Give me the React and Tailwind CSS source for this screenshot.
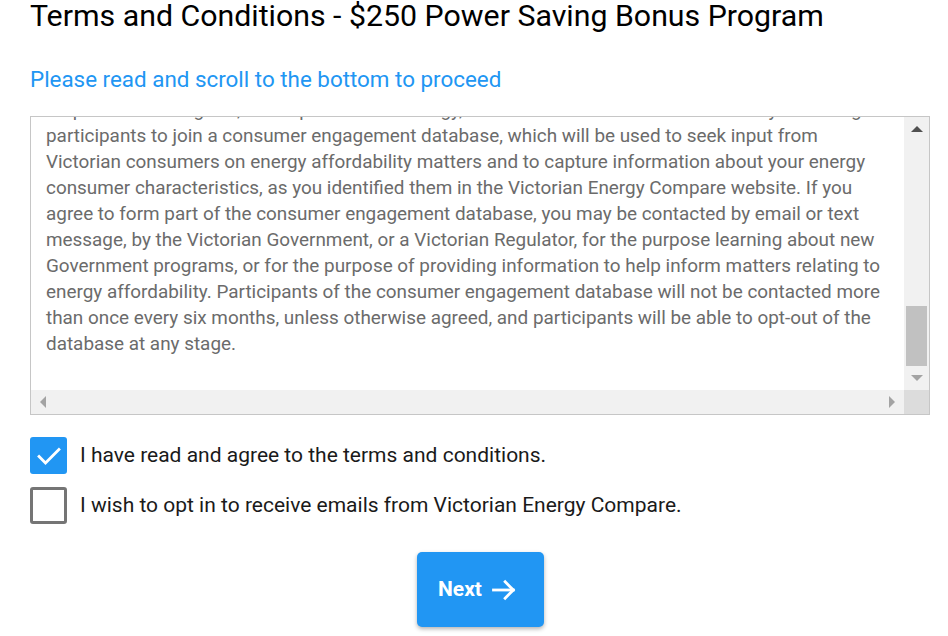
const lines = [
  "As part of the Program, the Department of Energy, Environment and Climate Action may invite eligible",
  "participants to join a consumer engagement database, which will be used to seek input from",
  "Victorian consumers on energy affordability matters and to capture information about your energy",
  "consumer characteristics, as you identified them in the Victorian Energy Compare website. If you",
  "agree to form part of the consumer engagement database, you may be contacted by email or text",
  "message, by the Victorian Government, or a Victorian Regulator, for the purpose learning about new",
  "Government programs, or for the purpose of providing information to help inform matters relating to",
  "energy affordability. Participants of the consumer engagement database will not be contacted more",
  "than once every six months, unless otherwise agreed, and participants will be able to opt-out of the",
  "database at any stage.",
];

function Arrow({ dir, color }) {
  const pts = {
    up: "0,6 6,0 12,6",
    down: "0,0 12,0 6,6",
    left: "6,0 6,12 0,6",
    right: "0,0 6,6 0,12",
  }[dir];
  const vertical = dir === "up" || dir === "down";
  return (
    <svg width={vertical ? 12 : 6} height={vertical ? 6 : 12} viewBox={vertical ? "0 0 12 6" : "0 0 6 12"}>
      <polygon points={pts} fill={color} />
    </svg>
  );
}

export default function App() {
  return (
    <div className="w-[948px] h-[636px] overflow-hidden bg-white pl-[30px] font-['Roboto',sans-serif]">
      <div className="w-[900px]">
        <h1 className="text-[30.3px] leading-[32px] text-black whitespace-nowrap">
          Terms and Conditions - $250 Power Saving Bonus Program
        </h1>
        <p className="mt-[34px] text-[22.4px] leading-[26px] text-[#2196f3]">
          Please read and scroll to the bottom to proceed
        </p>

        <div className="mt-[24px] w-[900px] h-[299px] border border-[#c6c6c6] flex flex-col">
          <div className="flex flex-1 min-h-0">
            <div className="flex-1 overflow-hidden pl-[15px]">
              <div className="-mt-[20px] text-[18.9px] leading-[26px] text-[#6b6b6b]">
                {lines.map((l, i) => (
                  <div key={i} className="whitespace-nowrap">{l}</div>
                ))}
              </div>
            </div>
            <div className="w-[25px] bg-[#f1f1f1] flex flex-col items-center">
              <div className="h-[22px] flex items-center justify-center pt-[2px]">
                <Arrow dir="up" color="#505050" />
              </div>
              <div className="flex-1 w-full px-[2px] flex flex-col justify-end">
                <div className="h-[60px] bg-[#c1c1c1]"></div>
              </div>
              <div className="h-[24px] flex items-center justify-center">
                <Arrow dir="down" color="#a3a3a3" />
              </div>
            </div>
          </div>
          <div className="h-[24px] flex">
            <div className="flex-1 bg-[#f1f1f1] flex items-center justify-between pl-[9px] pr-[9px]">
              <Arrow dir="left" color="#a3a3a3" />
              <Arrow dir="right" color="#a3a3a3" />
            </div>
            <div className="w-[25px] bg-[#dcdcdc]"></div>
          </div>
        </div>

        <div className="mt-[22px] flex flex-col gap-[13px]">
          <label className="flex items-center gap-[13px]">
            <span className="w-[37px] h-[37px] rounded-[3px] bg-[#2196f3] flex items-center justify-center">
              <svg width="28" height="28" viewBox="0 0 24 24" fill="none">
                <path d="M3.5 12.5 L9 18 L20.5 6.5" stroke="white" strokeWidth="2.4" strokeLinecap="square" />
              </svg>
            </span>
            <span className="text-[21px] text-[#1a1a1a]">I have read and agree to the terms and conditions.</span>
          </label>
          <label className="flex items-center gap-[13px]">
            <span className="w-[37px] h-[37px] rounded-[3px] border-[3px] border-[#757575] bg-white"></span>
            <span className="text-[21px] text-[#1a1a1a]">I wish to opt in to receive emails from Victorian Energy Compare.</span>
          </label>
        </div>

        <div className="mt-[28px] flex justify-center">
          <button className="w-[127px] h-[75px] rounded-[5px] bg-[#2196f3] text-white shadow-[0_2px_4px_rgba(0,0,0,0.3)] flex items-center justify-center gap-[8px] pr-[4px]">
            <span className="text-[21px] font-bold">Next</span>
            <svg width="28" height="28" viewBox="0 0 24 24" fill="none" stroke="white" strokeWidth="2.4" strokeLinecap="square">
              <path d="M3 12 H20" />
              <path d="M13 5 L20 12 L13 19" />
            </svg>
          </button>
        </div>
      </div>
    </div>
  );
}
